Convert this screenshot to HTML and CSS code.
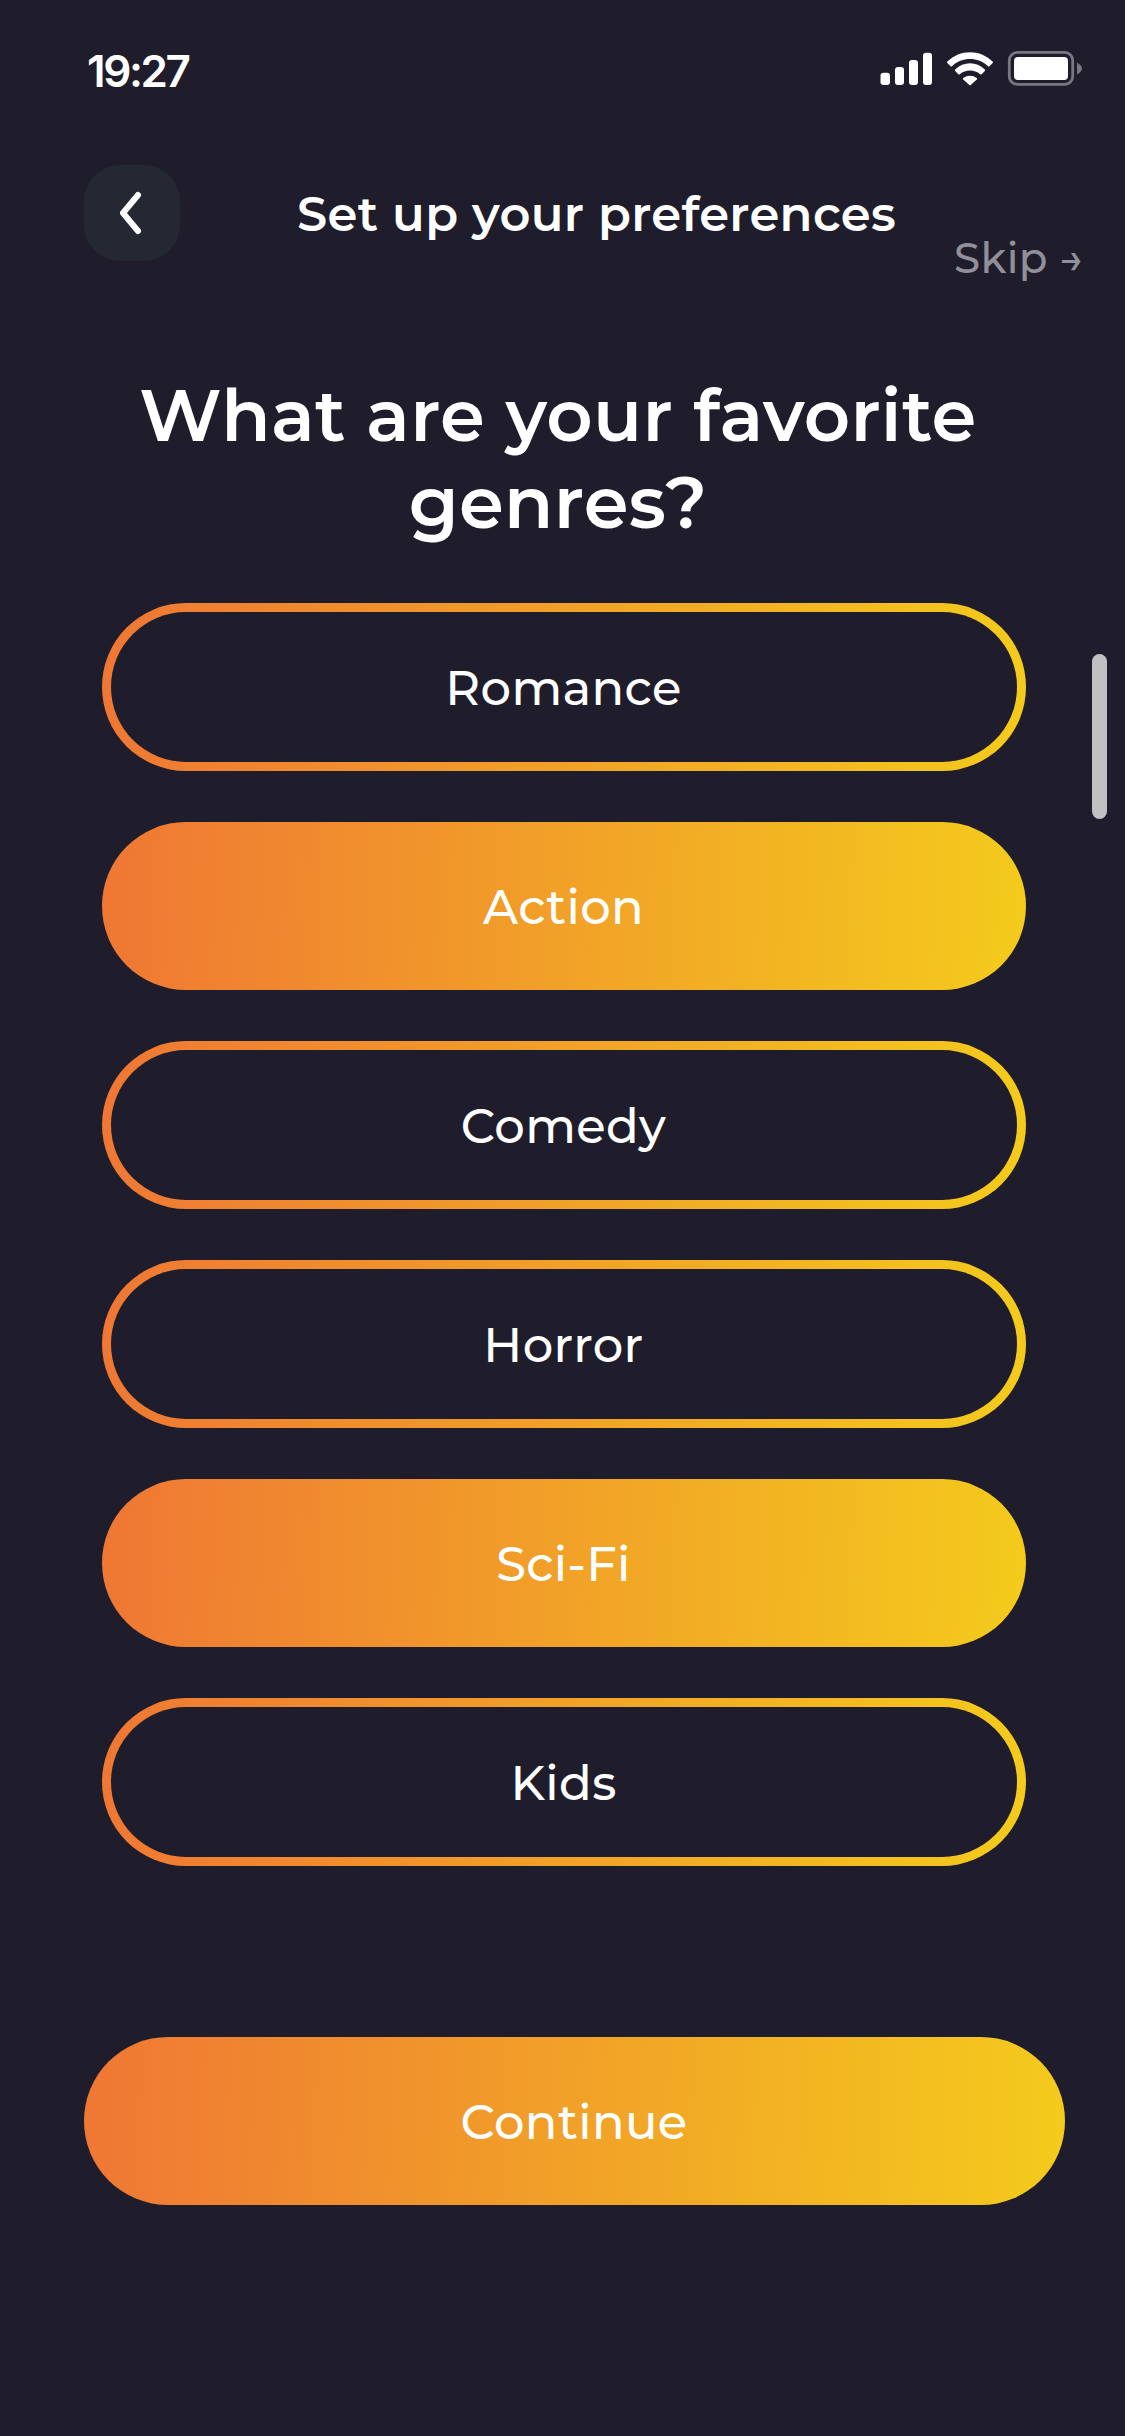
FILE: index.html
```html
<!DOCTYPE html>
<html lang="en">
<head>
<meta charset="utf-8">
<title>Set up your preferences</title>
<link rel="stylesheet" href="styles.css">
</head>
<body>
<div class="screen">
  <div class="status">
    <span class="time">19:27</span>
    <svg class="status-icons" width="206" height="36" viewBox="0 0 206 36">
      <g fill="#fff">
        <rect x="0.5" y="22.800" width="9.5" height="12.200" rx="3"/>
        <rect x="15" y="17" width="9" height="18" rx="3"/>
        <rect x="29" y="10" width="9" height="25" rx="3"/>
        <rect x="43" y="2.700" width="9" height="32.300" rx="3"/>
        <path d="M67.400 11.500C80 -1 100 -1 112.600 11.500Q113.400 12.300 112.600 13.100L109.500 16.200Q108.800 16.900 108 16.200C98 6.500 82 6.500 72 16.200Q71.200 16.900 70.500 16.200L67.400 13.100Q66.600 12.300 67.400 11.500Z"/>
        <path d="M75.200 19.500C83.500 11.200 96.500 11.200 104.800 19.500Q105.500 20.300 104.800 21.100L101.700 24.200Q101 24.900 100.200 24.200C94.500 19.200 85.500 19.200 79.800 24.200Q79 24.900 78.300 24.200L75.200 21.100Q74.500 20.300 75.200 19.500Z"/>
        <path d="M83.200 28.100C87 24.800 93 24.800 96.800 28.100Q97.400 28.800 96.800 29.400L90.700 35Q90 35.600 89.300 35L83.200 29.400Q82.600 28.800 83.200 28.100Z"/>
      </g>
      <rect x="129.300" y="2.400" width="63.400" height="32" rx="8" fill="none" stroke="#797782" stroke-width="2.800"/>
      <rect x="134" y="7" width="54" height="23" rx="4" fill="#fff"/>
      <path d="M197 12.500Q202 15.500 202 18.500Q202 21.500 197 24.500Z" fill="#797782"/>
    </svg>
  </div>
  <header class="header">
    <button class="back" aria-label="Back">
      <svg width="24" height="44" viewBox="0 0 24 44"><path d="M18 4L3 22L18 40" fill="none" stroke="#fff" stroke-width="6" stroke-linecap="round" stroke-linejoin="round"/></svg>
    </button>
    <h1 class="title">Set up your preferences</h1>
    <a class="skip">Skip →</a>
  </header>
  <h2 class="question">What are your favorite<br>genres?</h2>
  <main class="genres">
    <button class="pill">Romance</button>
    <button class="pill selected">Action</button>
    <button class="pill">Comedy</button>
    <button class="pill">Horror</button>
    <button class="pill selected">Sci-Fi</button>
    <button class="pill">Kids</button>
  </main>
  <button class="pill selected continue">Continue</button>
  <div class="scrollbar"></div>
</div>
</body>
</html>
```
FILE: styles.css
```css
* { box-sizing: border-box; }
body { margin: 0; background: #1f1d2b; }
button { border: 0; padding: 0; font: inherit; color: inherit; }
.screen {
  position: relative;
  display: flex;
  flex-direction: column;
  width: 1125px;
  height: 2436px;
  overflow: hidden;
  color: #fff;
  background: #1f1d2b;
  font-family: Montserrat, Inter, sans-serif;
  letter-spacing: 0.36px;
}
.status {
  display: flex;
  justify-content: space-between;
  height: 165px;
  padding: 41px 39px 0 87px;
}
.time { font-family: Inter, sans-serif; font-size: 44px; line-height: 60px; font-weight: 600; letter-spacing: -2.4px; }
.status-icons { margin-top: 9px; }
.header { display: flex; height: 96px; padding-left: 84px; }
.back {
  display: grid;
  place-items: center;
  width: 96px;
  height: 96px;
  border-radius: 36px;
  background: #252733;
}
.title {
  width: 600px;
  margin: 19px 0 0 117px;
  font-size: 48px;
  line-height: 60px;
  font-weight: 600;
  white-space: nowrap;
}
.skip {
  height: 60px;
  margin: 63px 0 0 57px;
  font-size: 42px;
  line-height: 60px;
  font-weight: 500;
  white-space: nowrap;
  color: #918f99;
}
.question {
  height: 174px;
  margin: 111px 0 0;
  padding-right: 9px;
  text-align: center;
  font-size: 72px;
  line-height: 87px;
  font-weight: 600;
  white-space: nowrap;
}
.genres { display: grid; gap: 51px; margin: 57px 99px 0 102px; }
.pill {
  display: grid;
  place-items: center;
  height: 168px;
  padding: 2px 1px 0 0;
  border: 9px solid transparent;
  border-radius: 84px;
  background:
    linear-gradient(#1f1d2b, #1f1d2b) padding-box,
    linear-gradient(92deg, #ef7734, #f4cb1c) border-box;
  font-size: 48px;
  line-height: 60px;
  font-weight: 500;
  letter-spacing: 0.36px;
}
.selected { background: linear-gradient(92deg, #ef7734, #f4cb1c) border-box; }
.continue { flex: none; width: 981px; margin: 171px 0 0 84px; }
.scrollbar {
  position: absolute;
  top: 654px;
  left: 1092px;
  width: 15px;
  height: 165px;
  border-radius: 8px;
  background: #c1c1c1;
}
```
